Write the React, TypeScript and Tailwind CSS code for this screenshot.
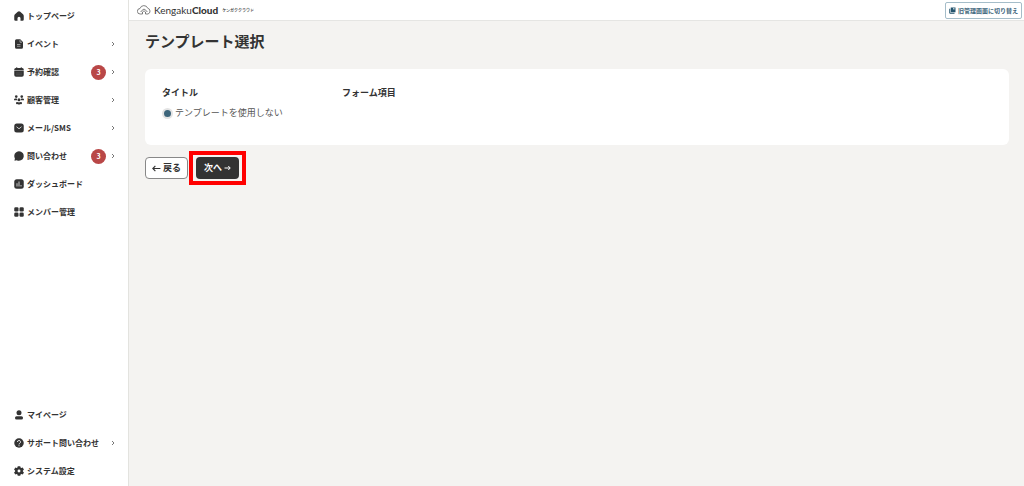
import React from 'react';

type MenuItem = {
  label: string;
  icon: React.ReactNode;
  badge?: number;
  hasChildren?: boolean;
};

const mainMenu: MenuItem[] = [
  {
    label: 'トップページ',
    icon: <path d="M7.500 1.500Q10-.8 12.500 1.500L18 6.500q1.500 1.500 1.500 3.500v7q0 2.500-2.500 2.500h-4V14.500a3 3 0 0 0-6 0v5H3Q.5 19.500.5 17v-7q0-2 1.500-3.500z" />,
  },
  {
    label: 'イベント',
    icon: (
      <>
        <path d="M5 .5h7.500L18 6v10.500a3 3 0 0 1-3 3H5a3 3 0 0 1-3-3v-13a3 3 0 0 1 3-3z" />
        <path d="M12 2v4.500H16M6 11h7M6 14.500h7" fill="none" stroke="#ddd" strokeWidth="1.200" />
      </>
    ),
    hasChildren: true,
  },
  {
    label: '予約確認',
    icon: (
      <>
        <path d="M5.500.5v3M14.500.5v3" stroke="#333" strokeWidth="2" />
        <path d="M3.500 2h13a3 3 0 0 1 3 3v1.800H.5V5a3 3 0 0 1 3-3zM.5 8h19v8a3.500 3.500 0 0 1-3.500 3.500H4A3.500 3.500 0 0 1 .5 16z" />
        <path d="M5 12h2M9 12h2M13 12h2M5 15.500h2M9 15.500h2M13 15.500h2" stroke="#888" strokeWidth="1.200" />
      </>
    ),
    badge: 3,
    hasChildren: true,
  },
  {
    label: '顧客管理',
    icon: (
      <>
        <circle cx="4.500" cy="3.200" r="2.600" />
        <circle cx="15.500" cy="3.200" r="2.600" />
        <circle cx="10" cy="9.500" r="3" />
        <path d="M0 10.500V9a2.500 2.500 0 0 1 2.500-2h2.800q1 0 .7 3.500zM20 10.500V9a2.500 2.500 0 0 0-2.500-2h-2.800q-1 0-.7 3.500z" />
        <rect x="4" y="14" width="4.500" height="4.500" rx="2" />
        <rect x="11.500" y="14" width="4.500" height="4.500" rx="2" />
        <rect x="8" y="14.500" width="4" height="4.500" rx="1" />
      </>
    ),
    hasChildren: true,
  },
  {
    label: 'メール/SMS',
    icon: (
      <>
        <rect x=".5" y="1" width="19" height="18" rx="5" />
        <path d="m5 7.500 5 4 5-4" fill="none" stroke="#fff" strokeWidth="1.500" />
      </>
    ),
    hasChildren: true,
  },
  {
    label: '問い合わせ',
    icon: <path d="M10 .5a9.500 9.500 0 1 1-4.500 17.900L1 19.500l.8-4.800A9.500 9.500 0 0 1 10 .5z" />,
    badge: 3,
    hasChildren: true,
  },
  {
    label: 'ダッシュボード',
    icon: (
      <>
        <rect x=".5" y=".5" width="19" height="19" rx="5" />
        <path d="M6 8.500V15M10 5v10M14 12v3" stroke="#fff" strokeWidth="1.500" />
      </>
    ),
  },
  {
    label: 'メンバー管理',
    icon: (
      <>
        <rect x=".5" y=".5" width="8.500" height="8.500" rx="2.500" />
        <rect x="11" y=".5" width="8.500" height="8.500" rx="2.500" />
        <rect x=".5" y="11" width="8.500" height="8.500" rx="2.500" />
        <rect x="11" y="11" width="8.500" height="8.500" rx="2.500" />
      </>
    ),
  },
];

const subMenu: MenuItem[] = [
  {
    label: 'マイページ',
    icon: (
      <>
        <circle cx="10" cy="5.500" r="5" />
        <rect x="2" y="12.500" width="16" height="6.500" rx="3" />
      </>
    ),
  },
  {
    label: 'サポート問い合わせ',
    icon: (
      <>
        <circle cx="10" cy="10" r="9.500" />
        <path d="M7 8a3 3 0 1 1 4.500 2.500q-1.500.8-1.500 2.300M10 14.500v2" fill="none" stroke="#fff" strokeWidth="1.800" />
      </>
    ),
    hasChildren: true,
  },
  {
    label: 'システム設定',
    icon: (
      <path
        fillRule="evenodd"
        d="M7.500.5h5l.6 2.700 1.500.9 2.900-.9 2.400 4.200-2.100 1.800v1.800l2.100 1.800-2.400 4.200-2.900-.9-1.500.9-.6 2.700h-5l-.6-2.700-1.500-.9-2.900.9L.1 12.800 2.200 11V9.200L.1 7.400l2.400-4.200 2.900.9 1.500-.9zM10 7.200a2.900 2.900 0 1 0 0 5.800 2.900 2.900 0 0 0 0-5.800z"
      />
    ),
  },
];

function MenuList({ items }: { items: MenuItem[] }) {
  return (
    <ul>
      {items.map((item) => (
        <li key={item.label}>
          <a href="#" className="flex h-7 items-center pr-3 pl-3.5 text-[8px] font-bold">
            <svg viewBox="0 0 20 20" className="mr-[3px] size-2.5 shrink-0" fill="#333" aria-hidden="true">
              {item.icon}
            </svg>
            <span className="whitespace-nowrap">{item.label}</span>
            <span className="ml-auto flex items-center gap-1">
              {item.badge && (
                <span className="flex size-[15px] items-center justify-center rounded-full bg-[#b94747] text-[7px] text-white">
                  {item.badge}
                </span>
              )}
              {item.hasChildren && (
                <svg viewBox="0 0 6 6" className="size-1.5" fill="none" stroke="#555" strokeWidth="0.8" aria-hidden="true">
                  <path d="m2 1 2 2-2 2" />
                </svg>
              )}
            </span>
          </a>
        </li>
      ))}
    </ul>
  );
}

function Logo() {
  return (
    <a href="#" className="flex items-center text-[#333]">
      <svg viewBox="0 0 28 20" className="mr-[3px] h-2.5 w-3.5" fill="none" stroke="#555" strokeWidth="1.500" aria-hidden="true">
        <path d="M11 18H6.500a5.500 5.500 0 0 1-.5-11A8.200 8.200 0 0 1 21.500 6.500 6 6 0 0 1 22 18h-5" />
        <path d="M7.500 14q0-2 6.500-6 6.500 4 6.500 6M11 18v-4l3-2.500 3 2.500v4" />
      </svg>
      <span className="font-[Lato,sans-serif] text-[10px]">
        Kengaku<b className="font-black">Cloud</b>
      </span>
      <span className="ml-1 text-[4px] font-medium">ケンガククラウド</span>
    </a>
  );
}

export default function App() {
  return (
    <div className="flex min-h-screen bg-[#f4f3f1] font-['Noto_Sans_CJK_JP',sans-serif] text-[#333]">
      <aside className="flex w-[129px] shrink-0 flex-col justify-between border-r border-[#e3e3df] bg-white pt-0.5 pb-px">
        <nav aria-label="メインメニュー">
          <MenuList items={mainMenu} />
        </nav>
        <nav aria-label="サブメニュー">
          <MenuList items={subMenu} />
        </nav>
      </aside>

      <div className="min-w-0 flex-1">
        <header className="flex h-[21px] items-center justify-between border-b border-[#e5e5e3] bg-white pr-0.5 pl-2">
          <Logo />
          <button className="flex h-[17px] items-center gap-0.5 rounded-[2px] border border-[#a5bdc9] bg-white px-[3px] text-[6px] font-bold text-[#3d657b]">
            <svg viewBox="0 0 14 14" className="size-[7px]" fill="#24546d" aria-hidden="true">
              <path d="M3.500 1H13v9.500H3.500z" />
              <path d="M1.500 3.500v9H11" fill="none" stroke="#24546d" strokeWidth="2" />
              <path d="M8 2v3.500l1.500-1 1.500 1V2z" fill="#b7cbd5" />
            </svg>
            旧管理画面に切り替え
          </button>
        </header>

        <main className="pt-2 pr-[15px] pl-4">
          <h1 className="text-[15px] leading-6 font-bold">テンプレート選択</h1>

          <section className="mt-4 rounded-md bg-white px-[17px] pt-4 pb-6 text-[9px]">
            <table className="w-full table-fixed text-left">
              <thead>
                <tr className="h-4 leading-4">
                  <th className="w-[180px] font-bold">タイトル</th>
                  <th className="font-bold">フォーム項目</th>
                </tr>
              </thead>
              <tbody>
                <tr>
                  <td className="pt-1">
                    <label className="flex h-4 items-center gap-0.5 text-[#555]">
                      <input
                        type="radio"
                        name="template"
                        defaultChecked
                        className="m-0 size-[11px] appearance-none rounded-full border-2 border-[#e3e3e3] checked:bg-[#3d657b]"
                      />
                      テンプレートを使用しない
                    </label>
                  </td>
                  <td />
                </tr>
              </tbody>
            </table>
          </section>

          <div className="mt-3 flex gap-2 text-[9px] font-bold">
            <button className="flex h-[22px] w-[43px] items-center justify-center gap-0.5 rounded-[4px] border border-[#888] bg-white">
              <svg viewBox="0 0 16 12" className="h-[7px] w-[9px]" fill="none" stroke="currentColor" strokeWidth="2" aria-hidden="true">
                <path d="M15 6H2M6 1.500 1.500 6 6 10.500" />
              </svg>
              戻る
            </button>
            <div className="relative">
              <button className="flex h-[22px] w-[43px] items-center justify-center gap-0.5 rounded-[4px] bg-[#333] text-white">
                次へ
                <svg viewBox="0 0 14 12" className="h-1.5 w-[7px]" fill="none" stroke="currentColor" strokeWidth="2" aria-hidden="true">
                  <path d="M1 6h11M8.500 2l4 4-4 4" />
                </svg>
              </button>
              <span className="pointer-events-none absolute -inset-x-[7px] -inset-y-[6px] border-4 border-[#f00]" />
            </div>
          </div>
        </main>
      </div>
    </div>
  );
}
